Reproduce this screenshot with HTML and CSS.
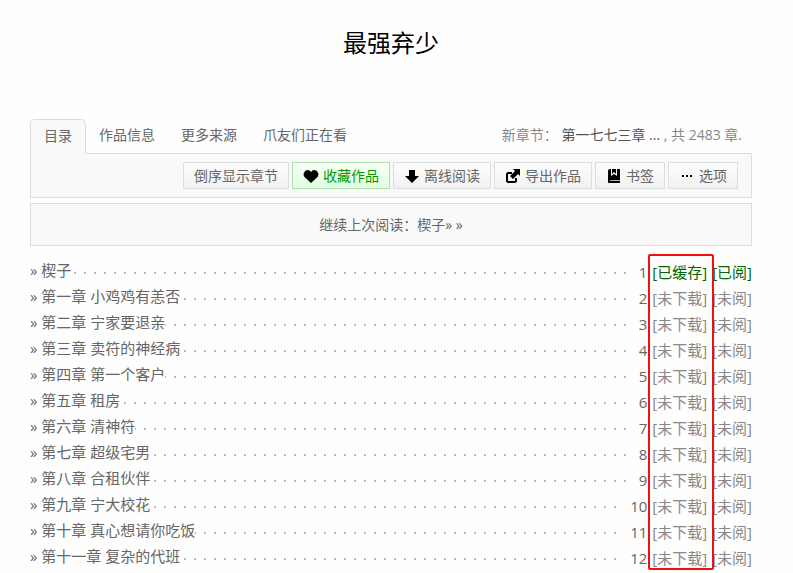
FILE: index.html
```html
<!DOCTYPE html>
<html lang="zh-CN">
<head>
  <meta charset="UTF-8">
  <meta name="viewport" content="width=device-width, initial-scale=1">
  <title>最强弃少</title>
  <link rel="stylesheet" href="styles.css">
</head>
<body>
<div class="container">
  <h1>最强弃少</h1>

  <!-- 标签栏 -->
  <div class="tabs">
    <a class="tab active" href="#toc">目录</a>
    <a class="tab" href="#info">作品信息</a>
    <a class="tab" href="#sources">更多来源</a>
    <a class="tab" href="#reading">爪友们正在看</a>
    <div class="latest">新章节： <a href="#latest">第一七七三章 ...</a> , 共 2483 章.</div>
  </div>

  <!-- 工具栏 -->
  <div class="toolbar">
    <button type="button">倒序显示章节</button>
    <button type="button" class="fav">
      <svg viewBox="0 0 16 16"><path d="M8 15L1.500 9Q0 7 .8 5Q2 2 4.500 2Q7 2 8 4Q9 2 11.500 2Q14 2 15.200 5Q16 7 14.500 9Z"/></svg>
      收藏作品
    </button>
    <button type="button">
      <svg viewBox="0 0 16 16"><path d="M5 2h6v6h4l-7 7-7-7h4z"/></svg>
      离线阅读
    </button>
    <button type="button">
      <svg viewBox="0 0 16 16"><path d="M8 1h7v7l-2-2-5 5-3-3 5-5z"/><path d="M7 5H3L2 6v7l1 1h7l1-1v-3" fill="none" stroke="#000" stroke-width="2"/></svg>
      导出作品
    </button>
    <button type="button">
      <svg viewBox="0 0 16 16"><path d="M4 1h10v14H3q-1 0-1-1V3q0-2 2-2z"/><path d="M5 1h1v5l2-2 2 2V1h1v7L8 6 5 8z" fill="#f5f5f5"/><path d="M4 12h10v1H4z" fill="#aaa"/></svg>
      书签
    </button>
    <button type="button">
      <svg viewBox="0 0 16 16"><path d="M3 7h2v2H3zM7 7h2v2H7zM11 7h2v2h-2z"/></svg>
      选项
    </button>
  </div>

  <div class="continue">继续上次阅读：<a href="#c1">楔子»</a> »</div>

  <!-- 章节列表 -->
  <div class="chapters">
    <ul>
      <li><a href="#c1">» 楔子</a><span class="side">1 <span class="done">[已缓存]</span> <span class="done">[已阅]</span></span></li>
      <li><a href="#c2">» 第一章 小鸡鸡有恙否</a><span class="side">2 <span>[未下载]</span> <span>[未阅]</span></span></li>
      <li><a href="#c3">» 第二章 宁家要退亲</a><span class="side">3 <span>[未下载]</span> <span>[未阅]</span></span></li>
      <li><a href="#c4">» 第三章 卖符的神经病</a><span class="side">4 <span>[未下载]</span> <span>[未阅]</span></span></li>
      <li><a href="#c5">» 第四章 第一个客户</a><span class="side">5 <span>[未下载]</span> <span>[未阅]</span></span></li>
      <li><a href="#c6">» 第五章 租房</a><span class="side">6 <span>[未下载]</span> <span>[未阅]</span></span></li>
      <li><a href="#c7">» 第六章 清神符</a><span class="side">7 <span>[未下载]</span> <span>[未阅]</span></span></li>
      <li><a href="#c8">» 第七章 超级宅男</a><span class="side">8 <span>[未下载]</span> <span>[未阅]</span></span></li>
      <li><a href="#c9">» 第八章 合租伙伴</a><span class="side">9 <span>[未下载]</span> <span>[未阅]</span></span></li>
      <li><a href="#c10">» 第九章 宁大校花</a><span class="side">10 <span>[未下载]</span> <span>[未阅]</span></span></li>
      <li><a href="#c11">» 第十章 真心想请你吃饭</a><span class="side">11 <span>[未下载]</span> <span>[未阅]</span></span></li>
      <li><a href="#c12">» 第十一章 复杂的代班</a><span class="side">12 <span>[未下载]</span> <span>[未阅]</span></span></li>
    </ul>
    <div class="mark"></div>
  </div>
</div>
</body>
</html>
```

FILE: styles.css
```css
body {
  margin: 0;
  background: #fefefe;
  color: #666;
  font-family: "Open Sans", "Noto Sans CJK SC", sans-serif;
  font-size: 14px;
}
a {
  color: inherit;
  text-decoration: none;
}
.container {
  margin: 0 41px 0 30px;
}
h1 {
  margin: 0;
  padding: 25px 0 58px;
  color: #000;
  font-size: 24px;
  font-weight: normal;
  line-height: 36px;
  text-align: center;
}

/* 标签栏 */
.tabs {
  display: flex;
  line-height: 32px;
}
.tab {
  padding: 0 13px 2px;
  border-bottom: 1px solid #ddd;
}
.tab.active {
  padding-bottom: 1px;
  border: 1px solid #ddd;
  border-bottom-color: #f8faf9;
  border-radius: 5px 5px 0 0;
  background: #f8faf9;
}
.latest {
  flex: 1;
  padding-right: 10px;
  border-bottom: 1px solid #ddd;
  color: #888;
  text-align: right;
}
.latest a {
  color: #555;
}

/* 工具栏 */
.toolbar {
  display: flex;
  justify-content: flex-end;
  gap: 3px;
  padding: 8px 13px;
  border: 1px solid #ddd;
  border-top: 0;
  background: #f8faf9;
}
button {
  display: flex;
  align-items: center;
  gap: 4px;
  height: 27px;
  padding: 0 10px 2px;
  border: 1px solid #ddd;
  background: linear-gradient(#fdfdfd, #f1f1f1);
  color: #666;
  font: inherit;
  white-space: nowrap;
  cursor: pointer;
}
button svg {
  width: 16px;
  height: 16px;
  margin-top: 2px;
}
button.fav {
  border-color: #ade0ad;
  background: linear-gradient(#f8fff8, #dfffdf);
  color: #090;
}

.continue {
  margin: 5px 0 12px;
  border: 1px solid #ddd;
  background: #f9f9f9;
  line-height: 41px;
  text-align: center;
}

/* 章节列表 */
.chapters {
  position: relative;
  font-size: 15px;
}
ul {
  margin: 0;
  padding: 0;
  list-style: none;
}
li {
  display: flex;
  justify-content: space-between;
  height: 26px;
  line-height: 24px;
  background: repeating-linear-gradient(to right, #bbb 0 2px, transparent 2px 10px) 4px 14px / 100% 2px no-repeat;
}
li a {
  background: #fefefe;
}
.side {
  display: flex;
  gap: 5px;
  padding: 2px 0 0 10px;
  background: #fefefe;
}
.side span {
  color: #888;
}
.side .done {
  color: #060;
}
/* 下载状态列的红框 */
.mark {
  position: absolute;
  top: -4px;
  right: 38px;
  bottom: 0;
  width: 62px;
  border: 2px solid #f01010;
  border-radius: 2px;
}
```
